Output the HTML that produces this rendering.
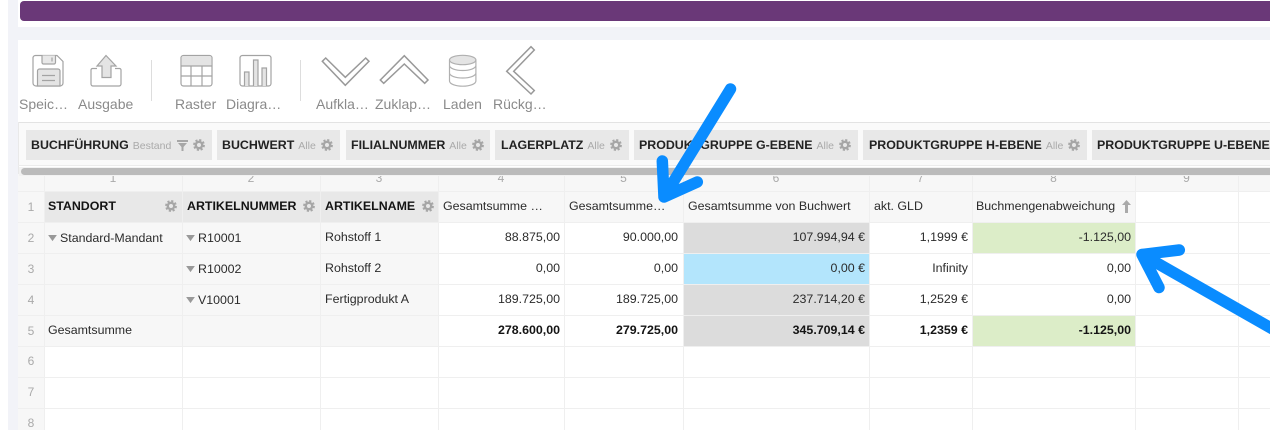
<!DOCTYPE html>
<html lang="de"><head><meta charset="utf-8"><title>Pivot</title>
<style>
html,body{margin:0;padding:0;background:#fff}
#p{position:relative;width:1270px;height:430px;overflow:hidden;background:#fff;font-family:"Liberation Sans",sans-serif;color:#333}
#p div{position:absolute;box-sizing:border-box}
.t{white-space:nowrap;font-size:12.4px;line-height:16px;height:16px;color:#2b2b2b}
.r{text-align:right}
.b{font-weight:bold;color:#141414}
.l{white-space:nowrap;font-size:14px;line-height:18px;color:#8a8a8a;top:95px}
.n{font-size:12px;line-height:16px;color:#aaa;text-align:center}
.chip{top:130px;height:30px;background:#e8e8e8}
.ct{top:137px;white-space:nowrap;font-size:12.4px;line-height:16px;font-weight:bold;color:#222}
.ct span{font-weight:normal;font-size:10.5px;color:#aaa;margin-left:4px}
.h{height:1px;left:18px;right:0;background:#efefef}
.v{width:1px;top:176px;bottom:0;background:#efefef}
.f{background:#f7f7f7}
svg{position:absolute;overflow:visible}
</style></head><body><div id="p">
<div style="left:8px;top:0;width:10px;height:430px;background:#f2f3f8"></div>
<div style="left:8px;right:0;top:27px;height:13px;background:#f2f3f8"></div>
<div style="left:20px;right:-10px;top:1px;height:20px;background:#6a3878;border-radius:4px"></div>

<svg width="0" height="0" style="position:absolute"><defs>
<symbol id="g" viewBox="0 0 12 12"><circle cx="6" cy="6" r="3.200" fill="none" stroke="#a6a6a6" stroke-width="2.400"/><circle cx="6" cy="6" r="5" fill="none" stroke="#a6a6a6" stroke-width="1.800" stroke-dasharray="2.200 1.730"/></symbol>
<symbol id="tr" viewBox="0 0 10 8"><path d="M0 0H10L5 7Z" fill="#999"/></symbol>
</defs></svg>

<!-- toolbar icons -->
<svg style="left:0;top:0" width="560" height="125" fill="none" stroke="#a3a3a3" stroke-width="1.200">
<path d="M35.500 55.500H57L63 61.500V83a3 3 0 0 1-3 3H36a3 3 0 0 1-3-3V58a2.500 2.500 0 0 1 2.500-2.500Z" fill="#fff"/>
<path d="M42 55.500V62.500a1.500 1.500 0 0 0 1.500 1.500H54a1.500 1.500 0 0 0 1.500-1.500V55.500" fill="#e8e8e8"/>
<path d="M52 57.500V61.500"/>
<path d="M37.500 86V71a2 2 0 0 1 2-2H58a2 2 0 0 1 2 2V86Z" fill="#e4e4e4"/>
<path d="M42 75.500H55M42 80.500H55"/>
<path d="M97 68.500H92.500a1.500 1.500 0 0 0-1.500 1.500V84a2 2 0 0 0 2 2H119a2 2 0 0 0 2-2V70a1.500 1.500 0 0 0-1.500-1.500H115"/>
<path d="M106 55.500L116 66H111V77.500H102V66H97Z" fill="#e4e4e4"/>
<rect x="181" y="55.500" width="31" height="30.500" rx="2.500" fill="#fff"/>
<path d="M181.500 66V58a2 2 0 0 1 2-2H209.500a2 2 0 0 1 2 2V66Z" fill="#e4e4e4" stroke="none"/>
<path d="M181 66H212M181 76H212M191 66V86M202 66V86"/>
<rect x="240" y="55.500" width="31" height="30.500" rx="2.500" fill="#fff"/>
<path d="M244.500 86V72H249V86M253.500 86V60H258V86M262 86V68H266.500V86" fill="#e4e4e4"/>
<g stroke="#999" stroke-width="1.500" fill="#fff">
<path d="M322.300 61.300L325.700 58L345.300 77.300L365.700 58L369 61.300L345.300 85.300Z"/>
<path d="M380.300 80L383.700 83.300L404.300 64L424.700 83.300L428 80L404.300 55.700Z"/>
<path d="M506.700 71.300L531 46.700L534.300 50L513.700 71.300L534.300 90.500L531 94Z"/>
</g>
<g stroke="#b0b0b0">
<ellipse cx="462.700" cy="60" rx="13.200" ry="4.700" fill="#e4e4e4"/>
<path d="M449.500 60V81c0 2.900 5.900 5.200 13.200 5.200s13.200-2.300 13.200-5.200V60M449.500 65.500c0 2.700 5.900 5 13.200 5s13.200-2.300 13.200-5M449.500 73c0 2.700 5.900 5 13.200 5s13.200-2.300 13.200-5"/>
</g>
</svg>
<div style="left:151px;top:60px;width:1px;height:41px;background:#ddd"></div>
<div style="left:300px;top:60px;width:1px;height:41px;background:#ddd"></div>
<div class="l" style="left:19px">Speic…</div>
<div class="l" style="left:78px">Ausgabe</div>
<div class="l" style="left:175px">Raster</div>
<div class="l" style="left:226px">Diagra…</div>
<div class="l" style="left:316px">Aufkla…</div>
<div class="l" style="left:375px">Zuklap…</div>
<div class="l" style="left:443px">Laden</div>
<div class="l" style="left:493px">Rückg…</div>

<!-- filter area -->
<div style="left:18px;right:0;top:122px;height:1px;background:#e3e3e3"></div>
<div style="left:18px;top:122px;width:1px;bottom:0;background:#e9e9e9"></div>
<div style="left:19px;right:0;top:123px;height:42px;background:#fafafa"></div>
<div style="left:18px;right:0;top:165px;height:1px;background:#ececec"></div>
<div class="chip" style="left:26px;width:186px"></div>
<div class="chip" style="left:217px;width:123px"></div>
<div class="chip" style="left:346px;width:144px"></div>
<div class="chip" style="left:495px;width:134px"></div>
<div class="chip" style="left:634px;width:224px"></div>
<div class="chip" style="left:863px;width:224px"></div>
<div class="chip" style="left:1092px;width:190px"></div>
<div class="ct" style="left:31px">BUCHFÜHRUNG<span>Bestand</span></div>
<div class="ct" style="left:222px">BUCHWERT<span>Alle</span></div>
<div class="ct" style="left:351px">FILIALNUMMER<span>Alle</span></div>
<div class="ct" style="left:501px">LAGERPLATZ<span>Alle</span></div>
<div class="ct" style="left:639px">PRODUKTGRUPPE G-EBENE<span>Alle</span></div>
<div class="ct" style="left:869px">PRODUKTGRUPPE H-EBENE<span>Alle</span></div>
<div class="ct" style="left:1097px">PRODUKTGRUPPE U-EBENE</div>
<svg style="left:177px;top:140px" width="11" height="11" viewBox="0 0 11 11"><path d="M0 0H11V2H0ZM1 3H10L6.500 7V11H4.500V7Z" fill="#a6a6a6"/></svg>
<svg style="left:193px;top:139px" width="12" height="12"><use href="#g"/></svg>
<svg style="left:321px;top:139px" width="12" height="12"><use href="#g"/></svg>
<svg style="left:472px;top:139px" width="12" height="12"><use href="#g"/></svg>
<svg style="left:610px;top:139px" width="12" height="12"><use href="#g"/></svg>
<svg style="left:839px;top:139px" width="12" height="12"><use href="#g"/></svg>
<svg style="left:1068px;top:139px" width="12" height="12"><use href="#g"/></svg>

<!-- grid backgrounds -->
<div class="f" style="left:18px;right:0;top:174px;height:18px"></div>
<div class="f" style="left:18px;top:192px;width:26px;height:238px"></div>
<div style="left:44px;top:192px;width:394px;height:30px;background:#e8e8e8"></div>
<div class="f" style="left:44px;top:223px;width:394px;height:123px"></div>
<div class="f" style="left:438px;top:192px;width:697px;height:30px"></div>
<div style="left:683px;top:223px;width:186px;height:30px;background:#dcdcdc"></div>
<div style="left:683px;top:254px;width:186px;height:30px;background:#b3e5fc"></div>
<div style="left:683px;top:285px;width:186px;height:61px;background:#dcdcdc"></div>
<div style="left:972px;top:223px;width:163px;height:30px;background:#dcedc8"></div>
<div style="left:972px;top:316px;width:163px;height:30px;background:#dcedc8"></div>

<!-- grid lines -->
<div class="h" style="top:191px"></div><div class="h" style="top:222px"></div><div class="h" style="top:253px"></div><div class="h" style="top:284px"></div><div class="h" style="top:315px"></div><div class="h" style="top:346px"></div><div class="h" style="top:377px"></div><div class="h" style="top:408px"></div>
<div class="v" style="left:44px"></div><div class="v" style="left:182px"></div><div class="v" style="left:320px"></div><div class="v" style="left:438px"></div><div class="v" style="left:564px"></div><div class="v" style="left:683px"></div><div class="v" style="left:869px"></div><div class="v" style="left:972px"></div><div class="v" style="left:1135px"></div><div class="v" style="left:1238px"></div>

<!-- column numbers -->
<div class="n" style="left:44px;width:138px;top:170px">1</div>
<div class="n" style="left:182px;width:138px;top:170px">2</div>
<div class="n" style="left:320px;width:118px;top:170px">3</div>
<div class="n" style="left:438px;width:126px;top:170px">4</div>
<div class="n" style="left:564px;width:119px;top:170px">5</div>
<div class="n" style="left:683px;width:186px;top:170px">6</div>
<div class="n" style="left:869px;width:103px;top:170px">7</div>
<div class="n" style="left:972px;width:163px;top:170px">8</div>
<div class="n" style="left:1135px;width:103px;top:170px">9</div>
<div style="left:19px;right:0;top:167px;height:9px;background:#f2f2f2"></div>
<div style="left:21px;right:0;top:168px;height:7px;background:#bbb;border-radius:4px 0 0 4px"></div>

<!-- row numbers -->
<div class="n" style="left:18px;width:26px;top:199px">1</div>
<div class="n" style="left:18px;width:26px;top:230px">2</div>
<div class="n" style="left:18px;width:26px;top:261px">3</div>
<div class="n" style="left:18px;width:26px;top:292px">4</div>
<div class="n" style="left:18px;width:26px;top:323px">5</div>
<div class="n" style="left:18px;width:26px;top:353px">6</div>
<div class="n" style="left:18px;width:26px;top:384px">7</div>
<div class="n" style="left:18px;width:26px;top:415px">8</div>

<!-- header -->
<div class="t b" style="left:48px;top:198px">STANDORT</div>
<div class="t b" style="left:187px;top:198px">ARTIKELNUMMER</div>
<div class="t b" style="left:325px;top:198px">ARTIKELNAME</div>
<svg style="left:165px;top:200px" width="12" height="12"><use href="#g"/></svg>
<svg style="left:303px;top:200px" width="12" height="12"><use href="#g"/></svg>
<svg style="left:422px;top:200px" width="12" height="12"><use href="#g"/></svg>
<div class="t" style="left:443px;top:198px">Gesamtsumme …</div>
<div class="t" style="left:569px;top:198px">Gesamtsumme…</div>
<div class="t" style="left:688px;top:198px">Gesamtsumme von Buchwert</div>
<div class="t" style="left:874px;top:198px">akt. GLD</div>
<div class="t" style="left:976px;top:198px">Buchmengenabweichung</div>
<svg style="left:1122px;top:200px" width="9" height="13" viewBox="0 0 9 13"><path d="M4.500 0L9 5H6V13H3V5H0Z" fill="#aaa"/></svg>

<!-- row 2 -->
<svg style="left:48px;top:235px" width="9" height="7"><use href="#tr"/></svg>
<div class="t" style="left:60px;top:230px">Standard-Mandant</div>
<svg style="left:186px;top:235px" width="9" height="7"><use href="#tr"/></svg>
<div class="t" style="left:198px;top:230px">R10001</div>
<div class="t" style="left:325px;top:229px">Rohstoff 1</div>
<div class="t r" style="left:438px;width:122px;top:229px">88.875,00</div>
<div class="t r" style="left:564px;width:114px;top:229px">90.000,00</div>
<div class="t r" style="left:683px;width:182px;top:229px">107.994,94 €</div>
<div class="t r" style="left:869px;width:99px;top:229px">1,1999 €</div>
<div class="t r" style="left:972px;width:159px;top:229px">-1.125,00</div>
<!-- row 3 -->
<svg style="left:186px;top:266px" width="9" height="7"><use href="#tr"/></svg>
<div class="t" style="left:198px;top:261px">R10002</div>
<div class="t" style="left:325px;top:260px">Rohstoff 2</div>
<div class="t r" style="left:438px;width:122px;top:260px">0,00</div>
<div class="t r" style="left:564px;width:114px;top:260px">0,00</div>
<div class="t r" style="left:683px;width:182px;top:260px">0,00 €</div>
<div class="t r" style="left:869px;width:99px;top:260px">Infinity</div>
<div class="t r" style="left:972px;width:159px;top:260px">0,00</div>
<!-- row 4 -->
<svg style="left:186px;top:297px" width="9" height="7"><use href="#tr"/></svg>
<div class="t" style="left:198px;top:292px">V10001</div>
<div class="t" style="left:325px;top:291px">Fertigprodukt A</div>
<div class="t r" style="left:438px;width:122px;top:291px">189.725,00</div>
<div class="t r" style="left:564px;width:114px;top:291px">189.725,00</div>
<div class="t r" style="left:683px;width:182px;top:291px">237.714,20 €</div>
<div class="t r" style="left:869px;width:99px;top:291px">1,2529 €</div>
<div class="t r" style="left:972px;width:159px;top:291px">0,00</div>
<!-- row 5 -->
<div class="t" style="left:48px;top:322px">Gesamtsumme</div>
<div class="t r b" style="left:438px;width:122px;top:322px">278.600,00</div>
<div class="t r b" style="left:564px;width:114px;top:322px">279.725,00</div>
<div class="t r b" style="left:683px;width:182px;top:322px">345.709,14 €</div>
<div class="t r b" style="left:869px;width:99px;top:322px">1,2359 €</div>
<div class="t r b" style="left:972px;width:159px;top:322px">-1.125,00</div>

<!-- arrows -->
<svg style="left:0;top:0" width="1270" height="430" fill="none" stroke="#0a8cff" stroke-width="11.500" stroke-linecap="round" stroke-linejoin="round">
<path d="M730.500 89L664 197M662.300 161L664 197L697.300 182"/>
<path d="M1285 336L1142 254.500M1159 287.500L1142 254.500L1179.300 250"/>
</svg>
</div></body></html>
